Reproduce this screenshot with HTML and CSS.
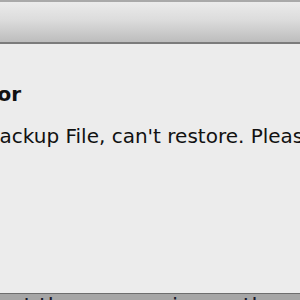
FILE: index.html
```html
<!DOCTYPE html>
<html>
<head>
<meta charset="utf-8">
<link rel="stylesheet" href="styles.css">
</head>
<body>
<div class="page">
  <div class="bg-top"><span class="bg-line">Sombrero Mbo Rolls Plus Extra Kit Moo Tin Sale Fox Hix Rule</span></div>
  <div class="window">
    <div class="titlebar"></div>
    <div class="content">
      <div class="title">Error</div>
      <div class="message">Invalid Backup File, can't restore. Please select another file.</div>
    </div>
  </div>
  <div class="bg-bottom"><span class="bg-line2">at the same price as the other</span></div>
</div>
</body>
</html>
```
FILE: styles.css
```css
html, body {
  margin: 0;
  padding: 0;
}
body {
  width: 300px;
  height: 300px;
  overflow: hidden;
  background: #9a9a9a;
}
.page {
  display: flex;
  flex-direction: column;
  height: 300px;
}
.bg-top {
  height: 2px;
  overflow: hidden;
  background: #a9a9a9;
  display: flex;
  align-items: flex-end;
}
.bg-line {
  font-family: "DejaVu Sans", sans-serif;
  font-size: 14px;
  line-height: 14px;
  color: #555;
  white-space: nowrap;
  letter-spacing: 2px;
}
.window {
  display: flex;
  flex-direction: column;
  height: 291px;
  background: #ececec;
}
.titlebar {
  height: 40px;
  background: linear-gradient(to bottom, #ebebeb 0%, #dcdcdc 45%, #bdbdbd 100%);
  border-bottom: 2px solid #7b7b7b;
}
.content {
  flex: 1;
  background: #ececec;
  overflow: hidden;
  padding-top: 38px;
}
.title {
  font-family: "DejaVu Sans", sans-serif;
  font-weight: bold;
  font-size: 20px;
  line-height: 24px;
  color: #111;
  margin-left: -36px;
  white-space: nowrap;
}
.message {
  font-family: "DejaVu Sans", sans-serif;
  font-size: 20px;
  line-height: 24px;
  color: #111;
  margin-left: -87px;
  margin-top: 18px;
  white-space: nowrap;
}
.bg-bottom {
  flex: 1;
  overflow: hidden;
  background: #a6a6a6;
  border-top: 1px solid #6e6e6e;
}
.bg-line2 {
  display: block;
  font-family: "DejaVu Sans", sans-serif;
  font-size: 22px;
  line-height: 22px;
  color: #1a1a2a;
  white-space: nowrap;
  margin-top: 1px;
  margin-left: 10px;
}
```
